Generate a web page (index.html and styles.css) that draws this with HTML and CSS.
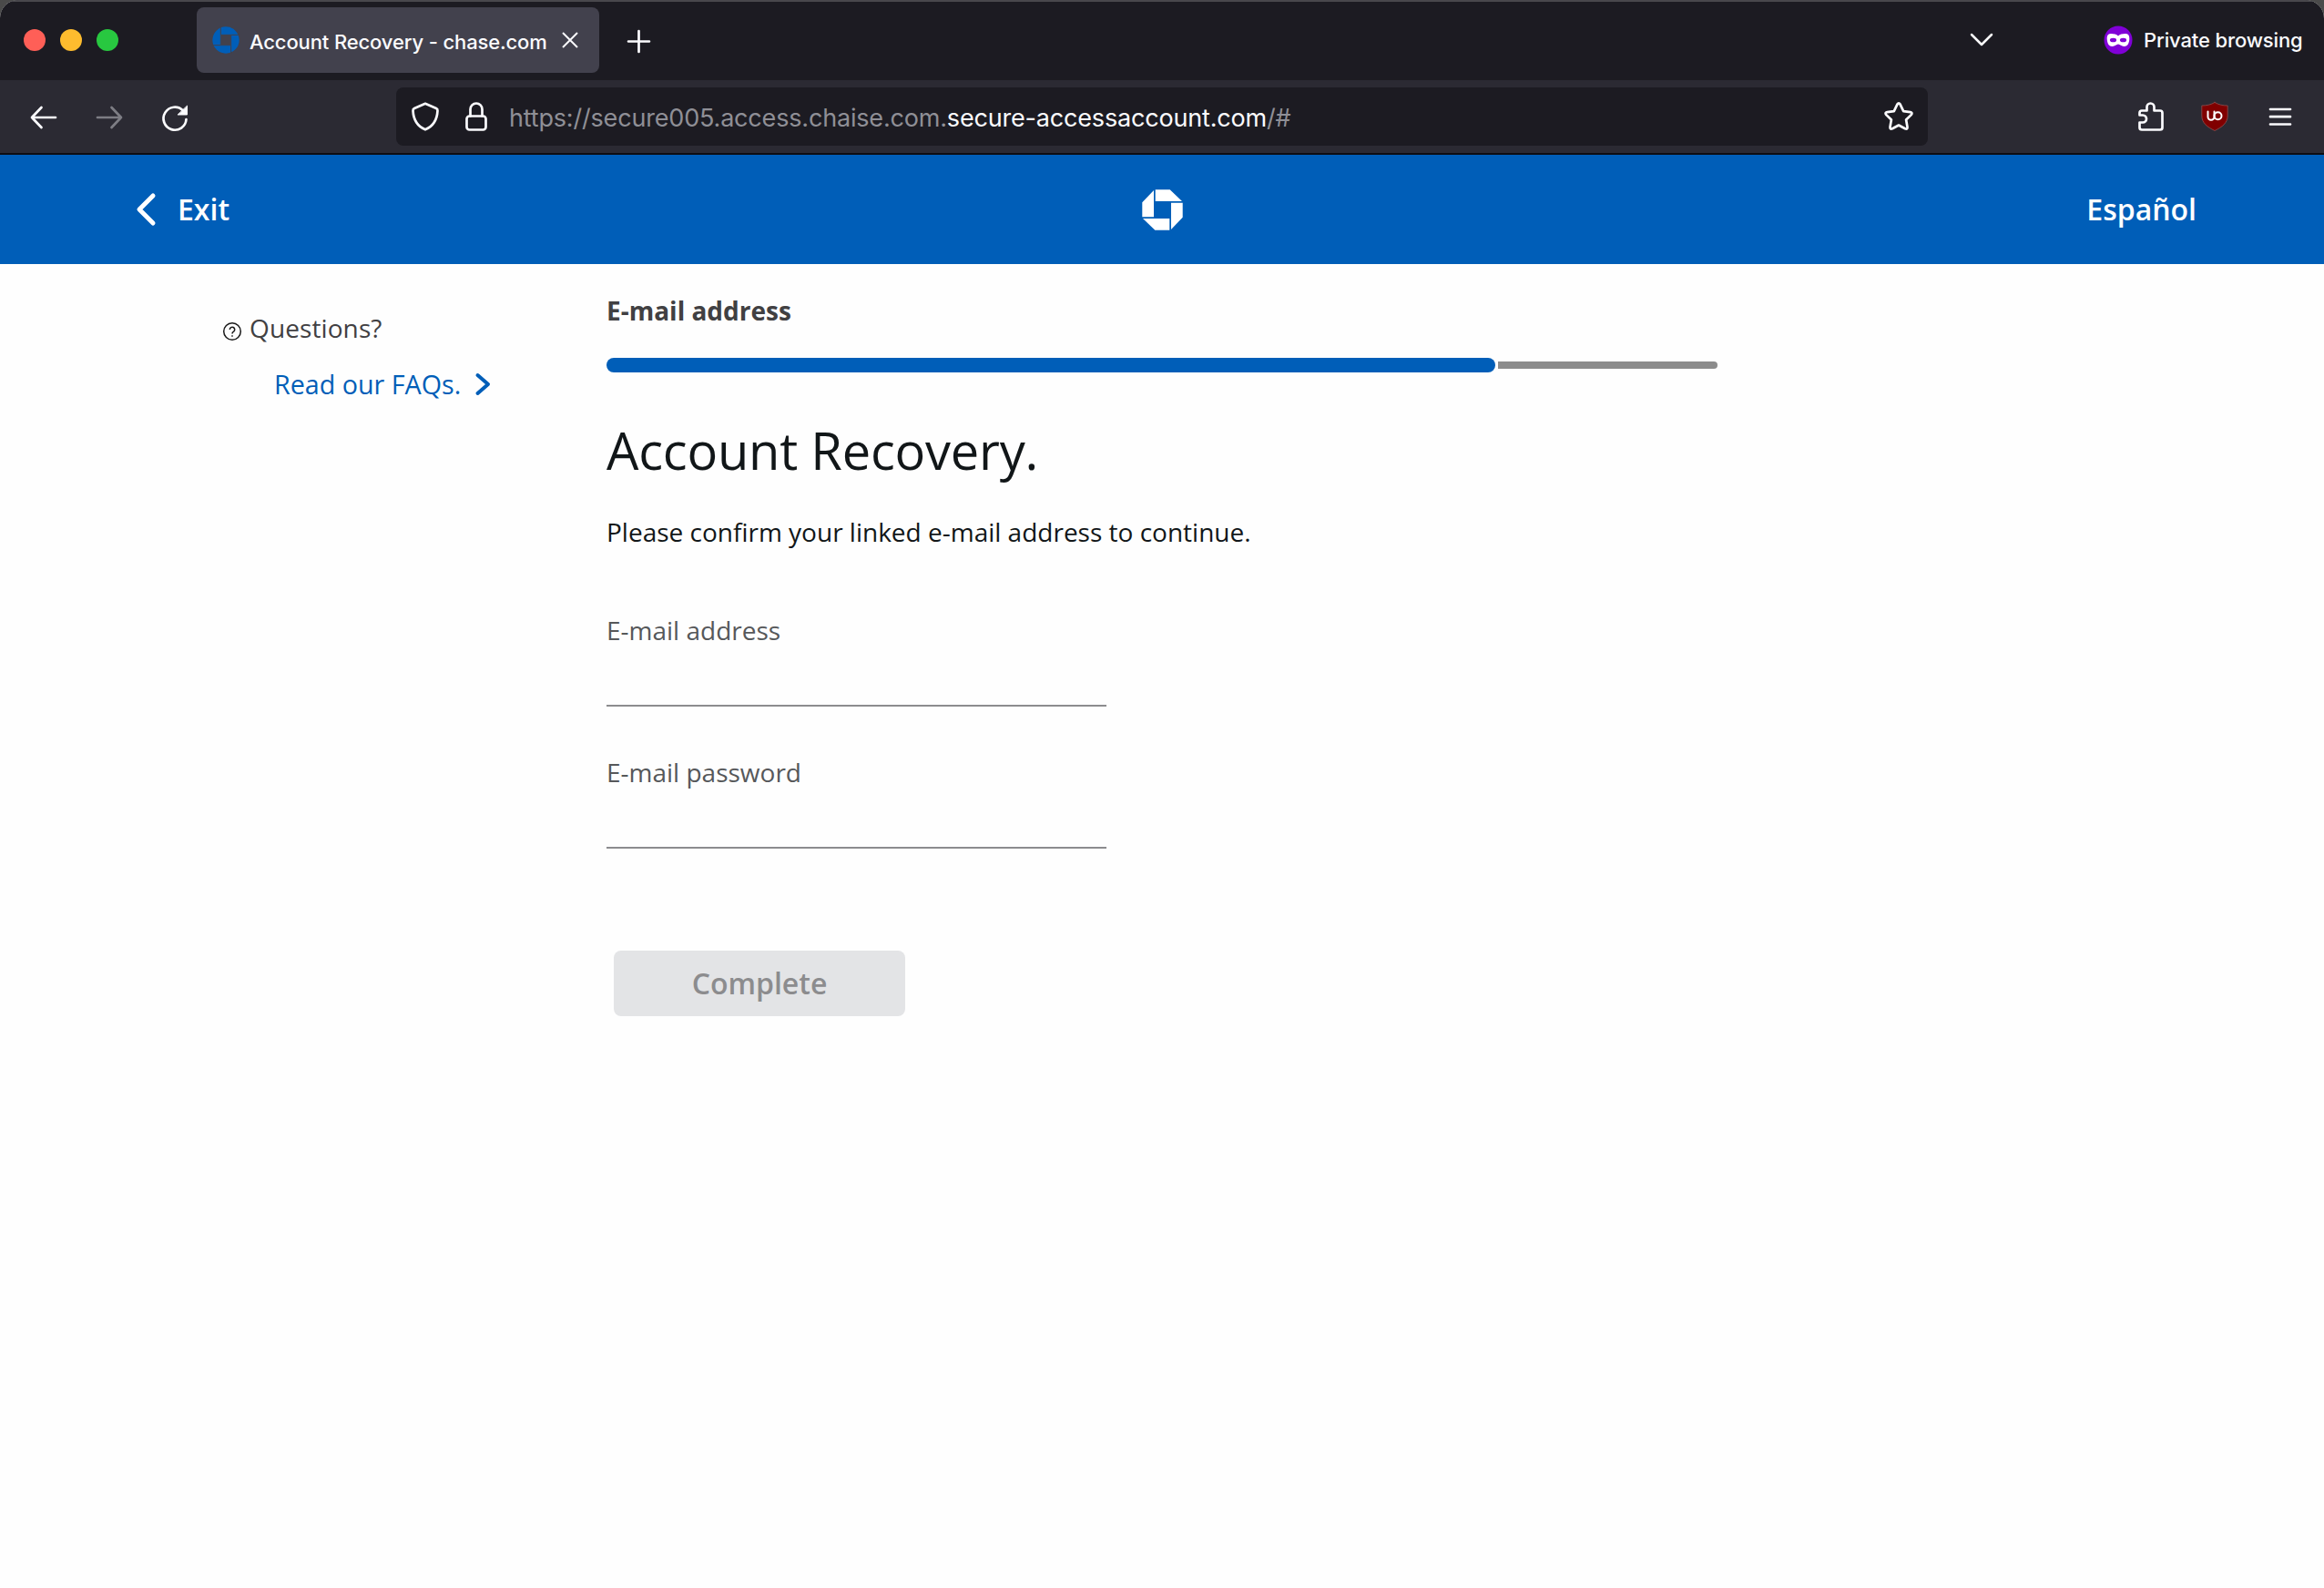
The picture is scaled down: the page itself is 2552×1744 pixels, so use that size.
FILE: index.html
```html
<!DOCTYPE html>
<html lang="en">
<head>
<meta charset="utf-8">
<title>Browser window illustration</title>
<link rel="stylesheet" href="styles.css">
</head>
<body>
<div class="window">
  <div class="tabstrip">
    <div class="lights"><i class="light red"></i><i class="light amber"></i><i class="light green"></i></div>
    <div class="tab">
      <svg class="favicon" viewBox="0 0 45 45"><circle cx="22.5" cy="22.5" r="22" fill="#005eb8"/><path d="M15 14h15v16H15z" fill="#42414d"/><path d="M14 1v29M1 31h29M31 15v29M15 14h29" stroke="#42414d" stroke-width="1.5"/></svg>
      <span class="tab-title">Account Recovery - chase.com</span>
      <svg class="tab-close" viewBox="0 0 18 18"><path d="M1 1l16 16M17 1L1 17"/></svg>
    </div>
    <svg class="new-tab" viewBox="0 0 24 24"><path d="M12 1v22M1 12h22"/></svg>
    <svg class="tabs-menu" viewBox="0 0 26 16"><path d="M2 2l11 11L24 2"/></svg>
    <div class="private">
      <svg class="mask" viewBox="0 0 32 32"><circle cx="16" cy="16" r="15.500" fill="#8000d7"/><path d="M16 11.500c-2-2-5-2.600-8-2.500-3 0-4.500 2-4.300 6C4 20 6 23 9.500 23c3 0 4.500-2.500 6.500-2.500s3.500 2.500 6.500 2.500c3.500 0 5.500-3 5.800-8 .2-4-1.300-6-4.300-6-3-.1-6 .5-8 2.500z" fill="#fff"/><ellipse cx="10.500" cy="16" rx="3.600" ry="2.300" fill="#8000d7"/><ellipse cx="21.500" cy="16" rx="3.600" ry="2.300" fill="#8000d7"/></svg>
      <span class="private-label">Private browsing</span>
    </div>
  </div>
  <div class="toolbar">
    <svg class="ico back" viewBox="0 0 32 32"><path d="M29 16H3M13.500 5L3 16l10.500 11"/></svg>
    <svg class="ico forward" viewBox="0 0 32 32"><path d="M3 16h26M18.500 5L29 16 18.500 27"/></svg>
    <svg class="ico reload" viewBox="0 0 32 32"><path d="M25 8.500A12.500 12.500 0 1 0 28.500 18"/><path class="solid" d="M29.500 3.500v9.500h-10z"/></svg>
    <div class="urlbar">
      <svg class="ico shield" viewBox="0 0 32 32"><path d="M16 1.800l12 5.200c1.300.6 1.600 1.400 1.500 2.600C29 19 25 26.500 16 30.300 7 26.500 3 19 2.500 9.600 2.400 8.400 2.700 7.600 4 7z"/></svg>
      <svg class="ico lock" viewBox="0 0 24 32"><rect x="1.500" y="15.500" width="21" height="15" rx="3"/><path d="M5.500 15.500V8a6.500 6.500 0 0 1 13 0v7.500"/></svg>
      <div class="url"><span class="u1">https://secure005.access.chaise.com.</span><span class="u2">secure-accessaccount.com</span><span class="u3">/#</span></div>
      <svg class="ico star" viewBox="0 0 32 32"><path d="M14.400 2.600Q16 .2 17.600 2.600l3.600 7.500 7.500 1q3 .6 1 3l-5.600 5.400 1.400 8q.3 3-2.500 1.800L16 25.500l-7 3.800q-2.800 1.200-2.500-1.800l1.400-8-5.600-5.400q-2-2.400 1-3l7.500-1z"/></svg>
    </div>
    <svg class="ico puzzle" viewBox="0 0 28 32"><path d="M4 30.500q-2.500 0-2.500-2.500v-5.500h3.500a4 4 0 0 0 0-8H1.500V12q0-2.500 2.500-2.500h5.500V5.500a4 4 0 0 1 8 0v4H24q2.500 0 2.500 2.500v16q0 2.500-2.500 2.500z"/></svg>
    <svg class="ico ublock" viewBox="0 0 30 32"><path d="M15 .5C11 3 6 4 .8 4v11c0 8 6 12.500 14.200 16.500C23.200 27.500 29.200 23 29.200 15V4C24 4 19 3 15 .5z" fill="#800000" stroke="#8e5050" stroke-width=".8"/><path d="M7.500 10.500v5.700a3.500 3.500 0 0 0 7 0v-5.700" fill="none" stroke="#fff" stroke-width="2"/><circle cx="18.500" cy="15.300" r="4" fill="none" stroke="#fff" stroke-width="2"/></svg>
    <svg class="ico menu" viewBox="0 0 26 20"><path d="M2 2h22M2 10.200h22M2 18.500h22"/></svg>
  </div>
  <div class="header">
    <div class="exit-link">
      <svg class="exit-arrow" viewBox="0 0 22 36"><path d="M19 3L4 18l15 15"/></svg>
      <span class="exit">Exit</span>
    </div>
    <svg class="logo" viewBox="0 0 45 45"><path d="M14.700.3h16L44 13H14.700zM44.700 14.700v16L32 44V14.700zM30.300 44.700h-16L1 32h29.300zM.3 30.300v-16L13 1v29.300z"/></svg>
    <span class="lang">Español</span>
  </div>
  <div class="page">
    <div class="aside">
      <div class="questions"><svg class="help" viewBox="0 0 20 20"><circle cx="10" cy="10" r="9.300"/><path d="M7.300 8a2.700 2.700 0 1 1 4.300 2.100Q10 11 10 12.600M10 14.300v1.500"/></svg><span class="q">Questions?</span></div>
      <div class="faq"><span class="f">Read our FAQs.</span><svg class="faq-arrow" viewBox="0 0 17 26"><path d="M2.500 3L14 13 2.500 23"/></svg></div>
    </div>
    <div class="main">
      <div class="step"><span class="s">E-mail address</span></div>
      <div class="progress"><div class="done"></div><div class="todo"></div></div>
      <div class="title"><span class="t">Account Recovery.</span></div>
      <div class="intro"><span class="i">Please confirm your linked e-mail address to continue.</span></div>
      <div class="field"><span class="l1">E-mail address</span></div>
      <div class="field"><span class="l2">E-mail password</span></div>
      <div class="complete"><span class="c">Complete</span></div>
    </div>
  </div>
</div>
</body>
</html>
```

FILE: styles.css
```css
* { box-sizing: border-box; }
body { margin: 0; background: #4a4a4a; }
svg { display: block; flex: none; fill: none; overflow: visible; }
span { white-space: nowrap; }
.window { width: 2552px; height: 1744px; overflow: hidden; border-radius: 20px 20px 0 0; background: #fefefe; font-family: "Open Sans", "Noto Sans", sans-serif; }

.tabstrip { display: flex; align-items: center; height: 88px; padding: 0 25px 2px 26px; border-top: 2px solid #48474c; background: #1c1b22; color: #fbfbfe; font-family: Inter, "Liberation Sans", sans-serif; }
.lights { display: flex; gap: 16px; margin-right: 86px; }
.light { width: 24px; height: 24px; border-radius: 50%; }
.red { background: #ff5f57; }
.amber { background: #febc2e; }
.green { background: #28c840; }
.tab { display: flex; align-items: center; width: 442px; height: 72px; padding-left: 17px; border-radius: 8px; background: #42414d; }
.favicon { width: 30px; height: 30px; margin-right: 11px; }
.tab-title { width: 343px; font-size: 22px; line-height: 30px; padding-top: 4px; font-weight: 500; letter-spacing: -.13px; }
.tab-close { width: 18px; height: 18px; stroke: #fbfbfe; stroke-width: 2; }
.new-tab { width: 25px; height: 25px; margin: 2px 0 0 31px; stroke: #fbfbfe; stroke-width: 2.600; stroke-linecap: round; }
.tabs-menu { width: 26px; height: 16px; margin-left: auto; stroke: #fbfbfe; stroke-width: 2.500; stroke-linecap: round; stroke-linejoin: round; }
.private { display: flex; align-items: center; width: 217px; margin-left: 121px; }
.mask { width: 32px; height: 32px; margin-right: 12px; }
.private-label { font-size: 22px; line-height: 30px; font-weight: 500; letter-spacing: -.13px; }

.toolbar { display: flex; align-items: center; height: 82px; padding: 0 34px 0 32px; border-bottom: 2px solid #0d0d12; background: #2b2a33; font-family: Inter, "Liberation Sans", sans-serif; }
.ico { width: 32px; height: 32px; stroke: #fbfbfe; stroke-width: 2.700; stroke-linecap: round; stroke-linejoin: round; }
.back, .forward { margin-top: 2px; }
.forward { margin-left: 40px; opacity: .4; }
.reload { margin: 2px 0 0 40px; }
.solid { fill: #fbfbfe; stroke-width: 1; }
.urlbar { display: flex; align-items: center; width: 1682px; height: 64px; margin-left: 227px; padding: 0 16px; border-radius: 8px; background: #1c1b22; }
.lock { width: 24px; margin-left: 28px; }
.url { margin-left: 24px; padding-top: 3px; font-size: 27px; line-height: 40px; letter-spacing: -.18px; color: #8f8f96; }
.u2 { color: #fbfbfe; }
.star { margin-left: auto; }
.puzzle { width: 28px; margin-left: auto; }
.ublock { width: 30px; margin-left: 41px; }
.menu { width: 26px; height: 20px; margin: 0 1px 0 44px; }

.header { display: grid; grid-template-columns: 1fr 45px 1fr; align-items: center; height: 120px; padding: 0 140px 0 141px; background: #005eb8; color: #fff; font-size: 32px; font-weight: 600; line-height: 44px; }
.exit-link { display: flex; align-items: center; gap: 24px; padding-left: 8px; }
.exit-arrow { width: 22px; height: 36px; stroke: #fff; stroke-width: 5; stroke-linecap: round; stroke-linejoin: round; }
.logo { width: 45px; height: 45px; fill: #fff; }
.lang { justify-self: end; }

.page { display: flex; color: #111618; font-size: 28px; line-height: 40px; }
.aside { width: 666px; padding: 50px 0 0 245px; }
.questions { display: flex; align-items: center; color: #414042; }
.help { width: 20px; height: 20px; margin: 8px 9px 0 0; stroke: #1a1a1a; stroke-width: 1.500; }
.q { letter-spacing: .1px; }
.faq { display: flex; align-items: center; margin: 22px 0 0 56px; color: #005eb8; font-size: 28.700px; }
.faq-arrow { width: 17px; height: 26px; margin-left: 16px; stroke: #005eb8; stroke-width: 4; stroke-linecap: round; stroke-linejoin: round; }
.main { width: 1220px; padding-top: 31px; }
.step { color: #414042; font-weight: 700; }
.progress { display: flex; align-items: center; gap: 3px; margin-top: 32px; }
.done { width: 976px; height: 16px; border-radius: 8px; background: #005eb8; }
.todo { width: 241px; height: 8px; border-radius: 0 4px 4px 0; background: #8c8c8c; }
.title { margin-top: 45px; font-size: 56px; line-height: 80px; letter-spacing: -.2px; }
.intro { margin-top: 30px; }
.field { width: 549px; height: 104px; margin-bottom: 52px; border-bottom: 2px solid #8c8c8e; color: #56585a; }
.intro + .field { margin-top: 68px; }
.complete { display: flex; align-items: center; justify-content: center; width: 320px; height: 72px; margin: 112px 0 0 8px; border-radius: 8px; background: #e3e4e6; color: #8c8c8e; font-size: 32px; font-weight: 600; }
```
